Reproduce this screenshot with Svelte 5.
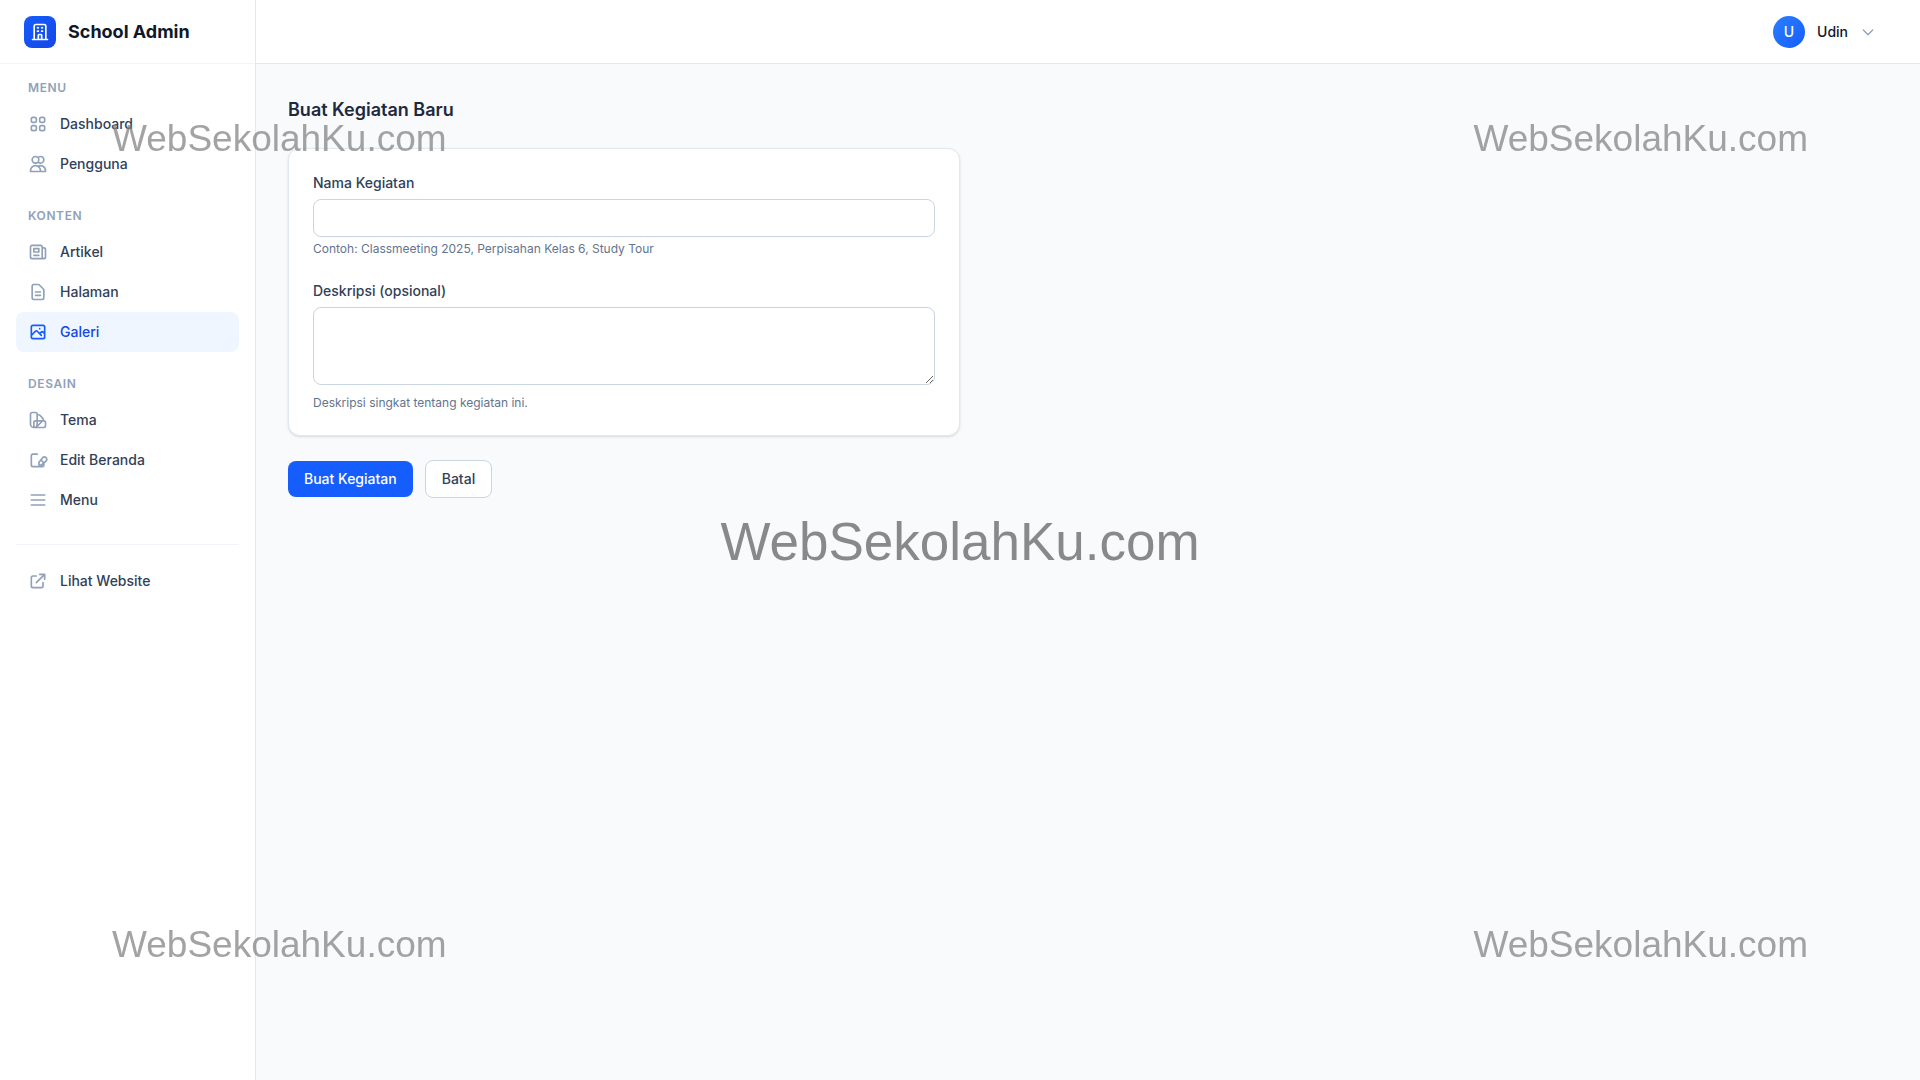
<script>
	const groups = [
		{
			title: 'Menu',
			items: [
				{
					label: 'Dashboard',
					icon: 'M4 6a2 2 0 012-2h2a2 2 0 012 2v2a2 2 0 01-2 2H6a2 2 0 01-2-2V6zM14 6a2 2 0 012-2h2a2 2 0 012 2v2a2 2 0 01-2 2h-2a2 2 0 01-2-2V6zM4 16a2 2 0 012-2h2a2 2 0 012 2v2a2 2 0 01-2 2H6a2 2 0 01-2-2v-2zM14 16a2 2 0 012-2h2a2 2 0 012 2v2a2 2 0 01-2 2h-2a2 2 0 01-2-2v-2z'
				},
				{
					label: 'Pengguna',
					icon: 'M12 4.354a4 4 0 110 5.292M15 21H3v-1a6 6 0 0112 0v1zm0 0h6v-1a6 6 0 00-9-5.197M13 7a4 4 0 11-8 0 4 4 0 018 0z'
				}
			]
		},
		{
			title: 'Konten',
			items: [
				{
					label: 'Artikel',
					icon: 'M19 20H5a2 2 0 01-2-2V6a2 2 0 012-2h10a2 2 0 012 2v1m2 13a2 2 0 01-2-2V7m2 13a2 2 0 002-2V9a2 2 0 00-2-2h-2m-4-3H9M7 16h6M7 8h6v4H7V8z'
				},
				{
					label: 'Halaman',
					icon: 'M9 12h6m-6 4h6m2 5H7a2 2 0 01-2-2V5a2 2 0 012-2h5.586a1 1 0 01.707.293l5.414 5.414a1 1 0 01.293.707V19a2 2 0 01-2 2z'
				},
				{
					label: 'Galeri',
					active: true,
					icon: 'M4 16l4.586-4.586a2 2 0 012.828 0L16 16m-2-2l1.586-1.586a2 2 0 012.828 0L20 14m-6-6h.01M6 20h12a2 2 0 002-2V6a2 2 0 00-2-2H6a2 2 0 00-2 2v12a2 2 0 002 2z'
				}
			]
		},
		{
			title: 'Desain',
			items: [
				{
					label: 'Tema',
					icon: 'M7 21a4 4 0 01-4-4V5a2 2 0 012-2h4a2 2 0 012 2v12a4 4 0 01-4 4zm0 0h12a2 2 0 002-2v-4a2 2 0 00-2-2H9a2 2 0 00-2 2v6M11 5.5l1.8.2a2 2 0 011.4.6l3.6 3.8a2 2 0 010 2.8l-7.6 7.3'
				},
				{
					label: 'Edit Beranda',
					icon: 'M11 5H6a2 2 0 00-2 2v11a2 2 0 002 2h11a2 2 0 002-2v-2M17.6 9.2a2.8 2.8 0 014.2 3.9L16.2 18h-3v-3.2l4.4-5.6zM16 12.5l3 3'
				},
				{ label: 'Menu', icon: 'M4 6h16M4 12h16M4 18h16' }
			]
		}
	];

	let name = '';
	let description = '';
</script>

{#snippet icon(path)}
	<svg class="icon" viewBox="0 0 24 24" aria-hidden="true"><path d={path} /></svg>
{/snippet}

<div class="layout">
	<aside class="sidebar">
		<div class="brand">
			<span class="logo">
				<svg viewBox="0 0 24 24" aria-hidden="true">
					<path d="M19 21V5a2 2 0 00-2-2H7a2 2 0 00-2 2v16m14 0h2m-2 0h-5m-9 0H3m2 0h5M9 7h1m-1 4h1m4-4h1m-1 4h1m-5 10v-5a1 1 0 011-1h2a1 1 0 011 1v5m-4 0h4" />
				</svg>
			</span>
			<span class="brand-name">School Admin</span>
		</div>
		<nav>
			{#each groups as group}
				<section>
					<h2>{group.title}</h2>
					{#each group.items as item}
						<a href="#{item.label}" class:active={item.active}>
							{@render icon(item.icon)}
							{item.label}
						</a>
					{/each}
				</section>
			{/each}
			<div class="external">
				<a href="#website">
					{@render icon('M10 6H6a2 2 0 00-2 2v10a2 2 0 002 2h10a2 2 0 002-2v-4M14 4h6m0 0v6m0-6L10 14')}
					Lihat Website
				</a>
			</div>
		</nav>
	</aside>

	<div class="content">
		<header>
			<button type="button" class="user">
				<span class="avatar">U</span>
				Udin
				<svg viewBox="0 0 24 24" aria-hidden="true"><path d="M19 9l-7 7-7-7" /></svg>
			</button>
		</header>
		<main>
			<h1>Buat Kegiatan Baru</h1>
			<form on:submit|preventDefault>
				<div class="card">
					<div class="field">
						<label for="name">Nama Kegiatan</label>
						<input id="name" type="text" bind:value={name} />
						<p>Contoh: Classmeeting 2025, Perpisahan Kelas 6, Study Tour</p>
					</div>
					<div class="field">
						<label for="description">Deskripsi (opsional)</label>
						<textarea id="description" rows="3" bind:value={description}></textarea>
						<p class="loose">Deskripsi singkat tentang kegiatan ini.</p>
					</div>
				</div>
				<div class="actions">
					<button type="submit" class="primary">Buat Kegiatan</button>
					<a href="#galeri" class="secondary">Batal</a>
				</div>
			</form>
		</main>
	</div>
</div>

<div class="watermark">
	<div class="row">
		<span>WebSekolahKu.com</span>
		<span>WebSekolahKu.com</span>
	</div>
	<span class="large">WebSekolahKu.com</span>
	<div class="row">
		<span>WebSekolahKu.com</span>
		<span>WebSekolahKu.com</span>
	</div>
</div>

<style>
	:global(body) {
		margin: 0;
		background: #f8fafc;
		font-family: Inter, sans-serif;
		font-size: 14px;
		line-height: 20px;
		color: #314158;
	}

	* {
		box-sizing: border-box;
	}

	h1,
	h2,
	p {
		margin: 0;
	}

	a {
		text-decoration: none;
	}

	svg {
		fill: none;
		stroke: currentColor;
		stroke-width: 2;
		stroke-linecap: round;
		stroke-linejoin: round;
		flex-shrink: 0;
	}

	.layout {
		display: flex;
		min-height: 100vh;
	}

	.sidebar {
		width: 256px;
		flex-shrink: 0;
		background: #fff;
		border-right: 1px solid #e2e8f0;
	}

	.brand {
		display: flex;
		align-items: center;
		gap: 12px;
		height: 64px;
		padding: 0 24px;
		border-bottom: 1px solid #f1f5f9;
	}

	.logo {
		display: flex;
		align-items: center;
		justify-content: center;
		width: 32px;
		height: 32px;
		border-radius: 8px;
		background: linear-gradient(to bottom right, #155dfc, #1447e6);
		color: #fff;
	}

	.logo svg {
		width: 20px;
		height: 20px;
	}

	.brand-name {
		font-size: 18px;
		line-height: 28px;
		font-weight: 700;
		color: #0f172b;
	}

	nav {
		padding: 16px;
	}

	section {
		margin-bottom: 24px;
	}

	h2 {
		margin-bottom: 8px;
		padding: 0 12px;
		font-size: 12px;
		line-height: 16px;
		font-weight: 600;
		letter-spacing: 0.05em;
		text-transform: uppercase;
		color: #90a1b9;
	}

	nav a {
		display: flex;
		align-items: center;
		gap: 12px;
		padding: 10px 12px;
		border-radius: 8px;
		font-weight: 500;
		color: #314158;
	}

	.icon {
		width: 20px;
		height: 20px;
		color: #90a1b9;
	}

	nav a.active {
		background: #eff6ff;
		color: #1447e6;
	}

	.active .icon {
		color: #155dfc;
	}

	.external {
		padding-top: 16px;
		border-top: 1px solid #f1f5f9;
	}

	.content {
		flex: 1;
		min-width: 0;
	}

	header {
		display: flex;
		align-items: center;
		justify-content: flex-end;
		height: 64px;
		padding: 0 32px;
		background: #fff;
		border-bottom: 1px solid #e2e8f0;
	}

	button {
		font: inherit;
		border: 0;
		cursor: pointer;
	}

	.user {
		display: flex;
		align-items: center;
		gap: 12px;
		padding: 0 12px;
		background: none;
		font-weight: 500;
		color: #0f172b;
	}

	.user svg {
		width: 16px;
		height: 16px;
		color: #90a1b9;
	}

	.avatar {
		display: flex;
		align-items: center;
		justify-content: center;
		width: 32px;
		height: 32px;
		border-radius: 50%;
		background: linear-gradient(to bottom right, #2b7fff, #155dfc);
		color: #fff;
	}

	main {
		padding: 32px;
	}

	h1 {
		margin-bottom: 24px;
		font-size: 18px;
		line-height: 28px;
		font-weight: 600;
		color: #1d293d;
	}

	form {
		max-width: 672px;
	}

	.card {
		display: grid;
		gap: 24px;
		padding: 24px;
		background: #fff;
		border: 1px solid #e2e8f0;
		border-radius: 12px;
		box-shadow: 0 1px 3px rgba(0, 0, 0, 0.1), 0 1px 2px -1px rgba(0, 0, 0, 0.1);
	}

	label {
		display: block;
		margin-bottom: 6px;
		font-weight: 500;
	}

	input,
	textarea {
		display: block;
		width: 100%;
		padding: 8px 12px;
		border: 1px solid #cad5e2;
		border-radius: 8px;
		background: #fff;
		font: inherit;
		color: inherit;
	}

	input {
		height: 38px;
	}

	.field p {
		margin-top: 4px;
		font-size: 12px;
		line-height: 16px;
		color: #62748e;
	}

	.field .loose {
		margin-top: 10px;
	}

	.actions {
		display: flex;
		align-items: center;
		gap: 12px;
		margin-top: 24px;
	}

	.primary,
	.secondary {
		padding: 8px 16px;
		border-radius: 8px;
		font-weight: 500;
	}

	.primary {
		background: #155dfc;
		color: #fff;
	}

	.secondary {
		border: 1px solid #cad5e2;
		background: #fff;
		color: #314158;
	}

	.watermark {
		position: fixed;
		inset: 0;
		display: flex;
		flex-direction: column;
		justify-content: space-between;
		padding: 117px 112px 113px;
		font-family: Helvetica, 'Liberation Sans', Arial, sans-serif;
		font-size: 37px;
		line-height: 44px;
		color: rgba(128, 128, 128, 0.72);
		pointer-events: none;
	}

	.row {
		display: flex;
		justify-content: space-between;
	}

	.large {
		align-self: center;
		font-size: 53px;
		line-height: 60px;
		color: rgba(112, 112, 112, 0.82);
	}
</style>
